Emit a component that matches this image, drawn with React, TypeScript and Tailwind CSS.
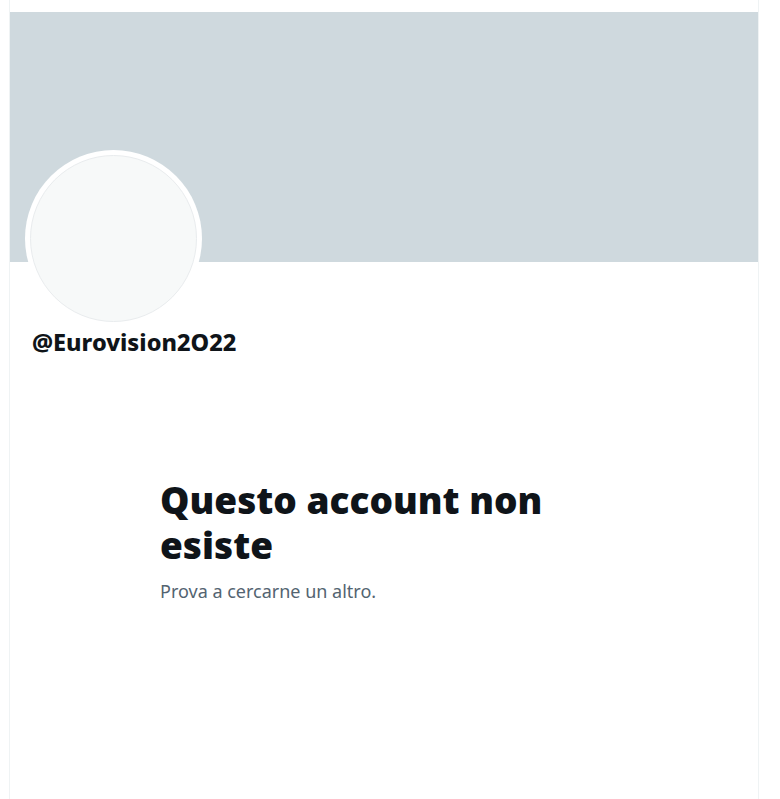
export default function App() {
  return (
    <div className="min-h-[799px] bg-white font-['Noto_Sans',sans-serif] text-[#0f1419]">
      <div className="ml-[9px] min-h-[799px] w-[750px] border-x border-[#eff3f4] pt-[12px]">
        {/* banner */}
        <div className="h-[250px] bg-[#cfd9de]" />

        {/* avatar */}
        <div className="px-[15px]">
          <div className="-mt-[112px] h-[177px] w-[177px] rounded-full bg-white p-[5px]">
            <div className="h-full w-full rounded-full border border-[#e9ecee] bg-[#f7f9f9]" />
          </div>
        </div>

        {/* handle */}
        <div className="mt-[1px] px-[22px]">
          <div className="text-[23.5px] font-extrabold leading-[28px]">@Eurovision2O22</div>
        </div>

        {/* empty state */}
        <div className="mt-[121px] ml-[150px] w-[440px]">
          <h2 className="text-[37px] font-black leading-[45px]">Questo account non esiste</h2>
          <p className="mt-[12px] text-[18px] leading-[24px] text-[#536471]">Prova a cercarne un altro.</p>
        </div>
      </div>
    </div>
  );
}
